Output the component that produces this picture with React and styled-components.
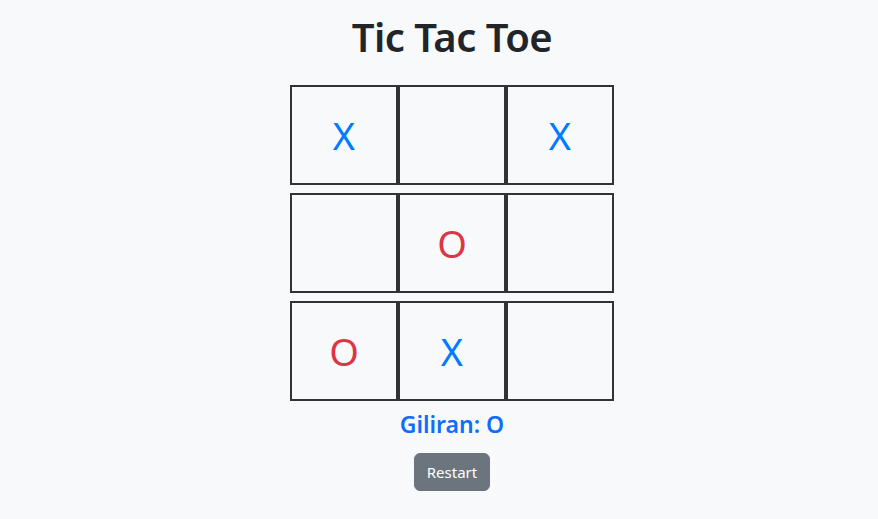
import React, { useState } from 'react'
import styled, { createGlobalStyle } from 'styled-components'

const GlobalStyle = createGlobalStyle`
    body {
        margin: 0;
        background-color: #f8f9fa;
        font-family: "Noto Sans", "Open Sans", sans-serif;
        color: #212529;
    }
`

const Page = styled.div`
    display: flex;
    flex-direction: column;
    align-items: center;
    padding-left: 26px;
    min-height: 519px;
`

const Title = styled.h1`
    margin: 13px 0 24px;
    font-size: 40px;
    font-weight: 600;
    line-height: 48px;
    letter-spacing: -0.5px;
`

const Board = styled.div`
    display: flex;
    flex-direction: column;
    gap: 8px;
`

const Row = styled.div`
    display: flex;
`

const Cell = styled.div`
    width: 108px;
    height: 100px;
    box-sizing: border-box;
    border: 2px solid #333;
    display: flex;
    justify-content: center;
    align-items: center;
    font-size: 38px;
    color: ${props => props.$value === 'X' ? '#007bff' : '#dc3545'};
    cursor: pointer;
`

const Turn = styled.h4`
    margin: 9px 0 15px;
    font-size: 23px;
    font-weight: 600;
    line-height: 28px;
    color: #0d6efd;
`

const Button = styled.button`
    height: 38px;
    padding: 0 12px;
    font-family: inherit;
    font-size: 15px;
    color: white;
    background-color: #6c757d;
    border: 1px solid #6c757d;
    border-radius: 6px;
    cursor: pointer;
`

const start = ['X', '', 'X', '', 'O', '', 'O', 'X', '']

export default function App() {
    const [cells, setCells] = useState(start)
    const [turn, setTurn] = useState('O')

    function play(i) {
        if (cells[i]) return
        const next = [...cells]
        next[i] = turn
        setCells(next)
        setTurn(turn === 'X' ? 'O' : 'X')
    }

    return (
        <Page>
            <GlobalStyle />
            <Title>Tic Tac Toe</Title>
            <Board>
                {[0, 1, 2].map(r => (
                    <Row key={r}>
                        {[0, 1, 2].map(c => (
                            <Cell key={c} $value={cells[r * 3 + c]} onClick={() => play(r * 3 + c)}>
                                {cells[r * 3 + c]}
                            </Cell>
                        ))}
                    </Row>
                ))}
            </Board>
            <Turn>Giliran: {turn}</Turn>
            <Button onClick={() => { setCells(Array(9).fill('')); setTurn('X') }}>Restart</Button>
        </Page>
    )
}
